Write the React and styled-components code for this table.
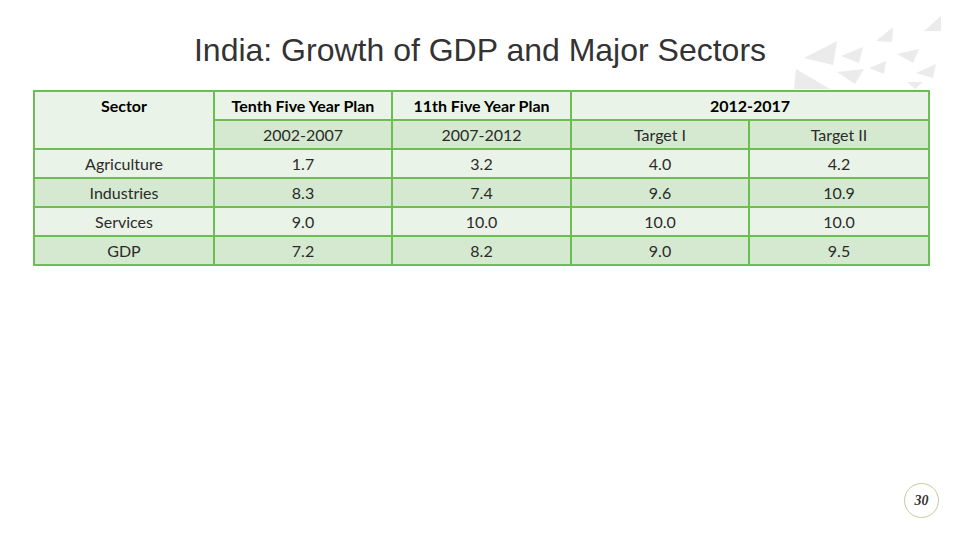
import React from 'react';
import styled, { createGlobalStyle } from "styled-components";

const GlobalStyle = createGlobalStyle`
  html, body {
    margin: 0;
    padding: 0;
    background: #ffffff;
  }
`;

const Slide = styled.div`
  position: relative;
  width: 960px;
  height: 540px;
  overflow: hidden;
  background: #ffffff;
  display: flex;
  flex-direction: column;
  padding: 32px 21px 22px 33px;
  box-sizing: border-box;
`;

const Decor = styled.svg`
  position: absolute;
  top: 0;
  right: 0;
  width: 180px;
  height: 100px;
`;

const Title = styled.h1`
  margin: 0 0 22px;
  font-family: "Liberation Sans", Arial, sans-serif;
  font-weight: normal;
  font-size: 32px;
  line-height: 36px;
  color: #333333;
  text-align: center;
  position: relative;
  padding-right: 12px;
`;

const Table = styled.table`
  position: relative;
  width: 895px;
  border-collapse: collapse;
  table-layout: fixed;
  font-family: Lato, "Open Sans", sans-serif;
  font-size: 16px;
  color: #1a1a1a;
  border: 2px solid #6cbd52;
`;

const Cell = styled.td`
  border: 2px solid #6cbd52;
  height: 27px;
  padding: 0;
  text-align: center;
  vertical-align: ${(p) => (p.$top ? "top" : "middle")};
  padding-top: ${(p) => (p.$top ? "4px" : "0")};
  font-weight: ${(p) => (p.$bold ? "bold" : "normal")};
  background: ${(p) => (p.$dark ? "#d5e9d0" : "#eaf3e7")};
  color: ${(p) => (p.$bold ? "#000" : "#2b2b2b")};
`;

const Footer = styled.div`
  margin-top: auto;
  display: flex;
  justify-content: flex-end;
`;

const PageNumber = styled.div`
  width: 33px;
  height: 33px;
  border-radius: 50%;
  border: 1px solid #c6cd9a;
  display: flex;
  align-items: center;
  justify-content: center;
  font-family: "Liberation Serif", "Times New Roman", serif;
  font-style: italic;
  font-weight: bold;
  font-size: 14px;
  color: #333;
`;

const rows = [
  ["Agriculture", "1.7", "3.2", "4.0", "4.2"],
  ["Industries", "8.3", "7.4", "9.6", "10.9"],
  ["Services", "9.0", "10.0", "10.0", "10.0"],
  ["GDP", "7.2", "8.2", "9.0", "9.5"],
];

const triangles = [
  "24,58 57,41 53,65",
  "61,56 83,47 79,63",
  "57,72 84,69 75,84",
  "16,69 50,89 14,89",
  "89,68 106,61 104,74",
  "96,41 113,27 112,42",
  "144,31 161,16 161,31",
  "117,54 139,49 133,63",
  "136,73 156,64 153,78",
  "127,82 143,82 135,89",
];

const App = () => {
  return (
    <Slide>
      <GlobalStyle />
      <Decor viewBox="0 0 180 100">
        {triangles.map((pts) => (
          <polygon key={pts} points={pts} fill="#ebebeb" />
        ))}
      </Decor>
      <Title>India: Growth of GDP and Major Sectors</Title>
      <Table>
        <colgroup>
          <col style={{ width: 180 }} />
          <col style={{ width: 178 }} />
          <col style={{ width: 179 }} />
          <col style={{ width: 178 }} />
          <col style={{ width: 180 }} />
        </colgroup>
        <tbody>
          <tr>
            <Cell rowSpan={2} $bold $top>Sector</Cell>
            <Cell $bold>Tenth Five Year Plan</Cell>
            <Cell $bold>11th Five Year Plan</Cell>
            <Cell colSpan={2} $bold>2012-2017</Cell>
          </tr>
          <tr>
            <Cell $dark>2002-2007</Cell>
            <Cell $dark>2007-2012</Cell>
            <Cell $dark>Target I</Cell>
            <Cell $dark>Target II</Cell>
          </tr>
          {rows.map((r, i) => (
            <tr key={r[0]}>
              {r.map((v, j) => (
                <Cell key={j} $dark={i % 2 === 1}>{v}</Cell>
              ))}
            </tr>
          ))}
        </tbody>
      </Table>
      <Footer>
        <PageNumber>30</PageNumber>
      </Footer>
    </Slide>
  );
};

export default App;
